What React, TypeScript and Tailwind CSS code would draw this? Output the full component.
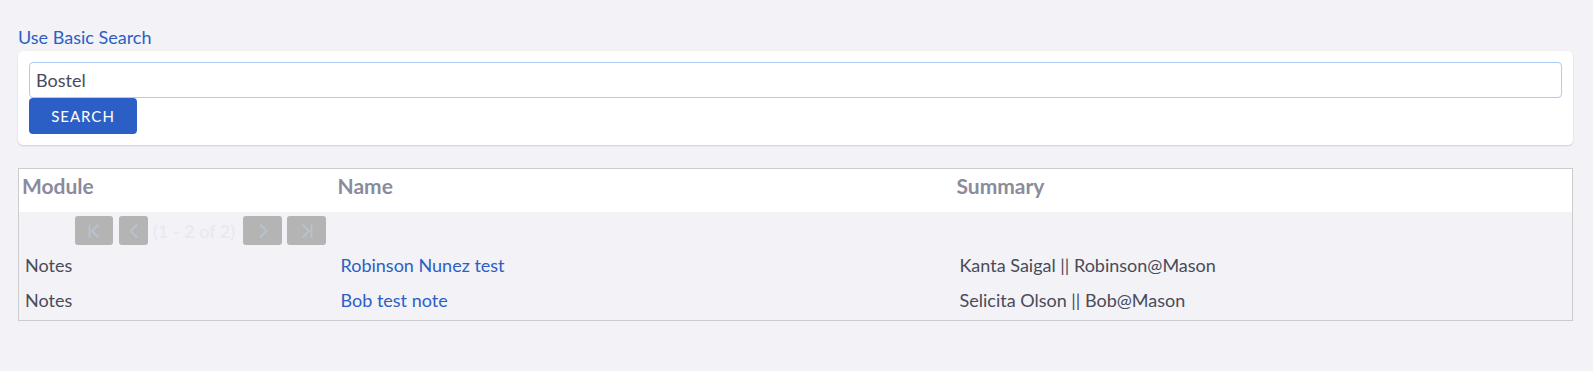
import React from "react";

interface ResultRow {
  module: string;
  name: string;
  summary: string;
}

const rows: ResultRow[] = [
  { module: "Notes", name: "Robinson Nunez test", summary: "Kanta Saigal || Robinson@Mason" },
  { module: "Notes", name: "Bob test note", summary: "Selicita Olson || Bob@Mason" },
];

const PagerIcon: React.FC<{ kind: "first" | "prev" | "next" | "last" }> = ({ kind }) => (
  <svg width="14" height="16" viewBox="0 0 14 16" fill="none" stroke="#b9c2cf" strokeWidth="1.8">
    {kind === "first" && (
      <>
        <path d="M2.5 1.5v13" />
        <path d="M11.5 1.5L5 8l6.5 6.5" />
      </>
    )}
    {kind === "prev" && <path d="M10 1.5L3.5 8l6.5 6.5" />}
    {kind === "next" && <path d="M4 1.5L10.5 8 4 14.5" />}
    {kind === "last" && (
      <>
        <path d="M11.5 1.5v13" />
        <path d="M2.5 1.5L9 8l-6.5 6.5" />
      </>
    )}
  </svg>
);

const PagerButton: React.FC<{ kind: "first" | "prev" | "next" | "last"; width: string }> = ({
  kind,
  width,
}) => (
  <button
    disabled
    className={`h-[29px] ${width} flex shrink-0 items-center justify-center rounded-[3px] bg-[#b4b4b4]`}
  >
    <PagerIcon kind={kind} />
  </button>
);

export default function App() {
  return (
    <div className="min-h-screen bg-[#f2f2f7] pl-[18px] pr-[20px] pt-[24px] font-['Lato','Liberation_Sans',sans-serif]">
      <a className="block text-[18px] leading-[27px] text-[#2b5fc5] cursor-pointer">Use Basic Search</a>

      <div className="rounded-[5px] bg-white p-[11px] shadow-[0_1px_2px_rgba(0,0,0,0.15)]">
        <input
          type="text"
          defaultValue="Bostel"
          className="block h-[36px] w-full rounded-[4px] border border-[#a9cdf7] px-[6px] text-[18px] text-[#4a4a58] outline-none"
        />
        <button className="block h-[36px] w-[108px] rounded-[4px] bg-[#2b5fc5] text-[15px] tracking-[1px] text-white">
          SEARCH
        </button>
      </div>

      <table className="mt-[23px] w-full table-fixed border-collapse border border-[#cccccc]">
        <colgroup>
          <col className="w-[316px]" />
          <col className="w-[619px]" />
          <col />
        </colgroup>
        <thead>
          <tr className="bg-white">
            {["Module", "Name", "Summary"].map((h) => (
              <th
                key={h}
                className="pl-[3px] pt-[5px] pb-[14px] text-left align-top text-[21px] font-bold leading-[24px] text-[#8a8b9c]"
              >
                {h}
              </th>
            ))}
          </tr>
        </thead>
        <tbody>
          <tr>
            <td colSpan={3} className="h-[38px] pl-[56px] pt-[4px] pb-[5px] align-top">
              <div className="flex items-center">
                <PagerButton kind="first" width="w-[38px]" />
                <div className="ml-[6px]">
                  <PagerButton kind="prev" width="w-[29px]" />
                </div>
                <span className="ml-[5px] w-[77px] whitespace-nowrap text-[18px] leading-[22px] text-[#e8e8ef]">
                  (1 - 2 of 2)
                </span>
                <div className="ml-[13px]">
                  <PagerButton kind="next" width="w-[39px]" />
                </div>
                <div className="ml-[5px]">
                  <PagerButton kind="last" width="w-[39px]" />
                </div>
              </div>
            </td>
          </tr>
          {rows.map((r, i) => (
            <tr key={i} className="text-[18px] leading-[22px]">
              <td className="pl-[6px] pt-[4px] pb-[9px] text-[#4a4a58]">{r.module}</td>
              <td className="pl-[6px] pt-[4px] pb-[9px]">
                <a className="cursor-pointer text-[#2b5fc5]">{r.name}</a>
              </td>
              <td className="pl-[6px] pt-[4px] pb-[9px] text-[#4a4a58]">{r.summary}</td>
            </tr>
          ))}
        </tbody>
      </table>
    </div>
  );
}
